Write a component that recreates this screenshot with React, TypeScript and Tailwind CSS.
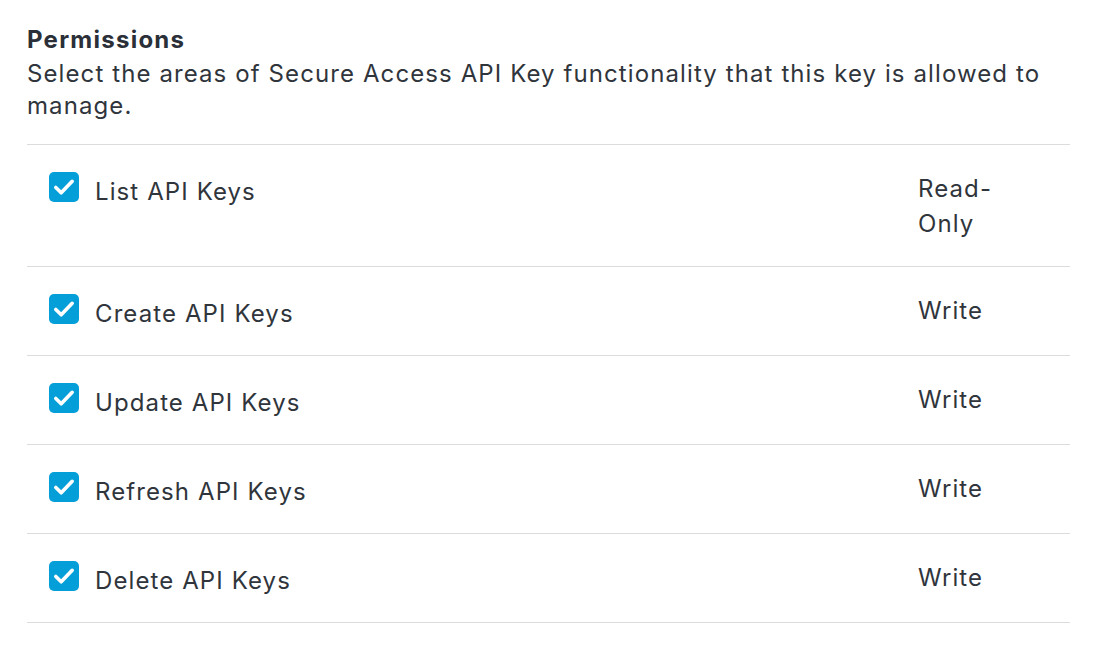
import React from "react";

const permissions = [
  { label: "List API Keys", access: "Read-Only" },
  { label: "Create API Keys", access: "Write" },
  { label: "Update API Keys", access: "Write" },
  { label: "Refresh API Keys", access: "Write" },
  { label: "Delete API Keys", access: "Write" },
];

function CheckBox() {
  return (
    <span className="mt-[1px] flex h-[30px] w-[30px] shrink-0 items-center justify-center rounded-[5px] bg-[#049fd9]">
      <svg width="30" height="30" viewBox="0 0 30 30" fill="none">
        <path
          d="M6.8 15.5L12.2 20.8L23.2 9.3"
          stroke="white"
          strokeWidth="3.6"
          strokeLinecap="round"
          strokeLinejoin="round"
        />
      </svg>
    </span>
  );
}

export default function App() {
  return (
    <div
      className="min-h-[648px] bg-white pl-[27px] pr-[30px] pt-[24px] text-[#30353c] tracking-[1.1px]"
      style={{ fontFamily: "Inter, 'Liberation Sans', sans-serif" }}
    >
      <h2 className="text-[24px] font-bold leading-[32px] tracking-[1.25px] text-[#2b3038]">
        Permissions
      </h2>
      <p className="mt-[2px] text-[24px] leading-[32px]">
        Select the areas of Secure Access API Key functionality that this key is allowed to manage.
      </p>

      <div className="mt-[22px] border-t border-[#dcdcdc]">
        {permissions.map((p, i) => (
          <div
            key={p.label}
            className={
              i === 0
                ? "flex items-start border-b border-[#dcdcdc] pb-[25px] pl-[22px] pt-[26px]"
                : "flex items-start border-b border-[#dcdcdc] pb-[27px] pl-[22px] pt-[26px]"
            }
          >
            <div className="flex flex-1 items-start gap-[16px]">
              <CheckBox />
              <span className="mt-[7px] text-[24px] leading-[27px]">{p.label}</span>
            </div>
            <div className="box-content w-[100px] pr-[52px] text-[24px] leading-[35px]">
              {p.access === "Read-Only" ? (
                <>
                  Read-
                  <br />
                  Only
                </>
              ) : (
                p.access
              )}
            </div>
          </div>
        ))}
      </div>
    </div>
  );
}
